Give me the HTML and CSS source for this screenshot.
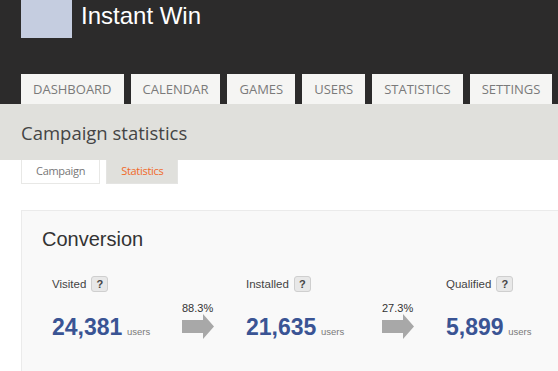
FILE: index.html
```html
<!doctype html>
<html lang="en">
<head>
<title>Campaign statistics | Instant Win</title>
<meta charset=UTF-8>
<link rel="stylesheet" href="styles.css">
</head>
<body>
<div class="top">
<div class="brand">
<div class="logo"></div>
<span class="appname">Instant Win</span>
</div>
<ul class="nav">
<li>Dashboard</li>
<li>Calendar</li>
<li>Games</li>
<li>Users</li>
<li>Statistics</li>
<li>Settings</li>
</ul>
</div>
<div class="band">
<h1>Campaign statistics</h1>
</div>
<ul class="subtabs">
<li>Campaign</li>
<li class="on">Statistics</li>
</ul>
<div class="panel">
<h2>Conversion</h2>
<div class="funnel">
<div class="stat">
<div class="label">Visited <span class="help">?</span></div>
<div class="num">24,381<small> users</small></div>
</div>
<div class="step">
<span class="pct">88.3%</span>
<svg viewBox="0 0 32 25" width="32" height="25"><polygon points="0,6 21,6 21,0 32,12.5 21,25 21,19 0,19" fill="#a8a8a8"/></svg>
</div>
<div class="stat">
<div class="label">Installed <span class="help">?</span></div>
<div class="num">21,635<small> users</small></div>
</div>
<div class="step">
<span class="pct">27.3%</span>
<svg viewBox="0 0 32 25" width="32" height="25"><polygon points="0,6 21,6 21,0 32,12.5 21,25 21,19 0,19" fill="#a8a8a8"/></svg>
</div>
<div class="stat">
<div class="label">Qualified <span class="help">?</span></div>
<div class="num">5,899<small> users</small></div>
</div>
</div>
</div>
</body>
</html>
```

FILE: styles.css
```css
body {margin: 0; background-color: #fff; font-family: "Liberation Sans", Arial, sans-serif; overflow: hidden;}
ul {list-style-type: none; margin: 0; padding: 0;}
.top {background-color: #2c2b2b; height: 104px; padding-left: 21px; display: flex; flex-direction: column; justify-content: space-between;}
.brand {display: flex; align-items: flex-start;}
.logo {width: 51px; height: 38px; background-color: #c5cde0;}
.appname {color: white; font-size: 24px; margin-left: 9px; line-height: 32px;}
.nav {display: flex; gap: 7px;}
.nav li {background: #f5f5f3; color: #7a7a7a; font-family: "Open Sans", sans-serif; font-size: 13px; text-transform: uppercase; padding: 0 12px; height: 30px; line-height: 30px;}
.band {background-color: #e0e0dc; height: 56px; padding-left: 21px; display: flex; align-items: center;}
h1 {font-family: "Open Sans", sans-serif; font-weight: normal; font-size: 18.5px; color: #444; margin: 0;}
.subtabs {display: flex; gap: 6px; padding-left: 21px;}
.subtabs li {font-family: "Open Sans", sans-serif; font-size: 11px; letter-spacing: -0.3px; color: #777; height: 23px; line-height: 22px; padding: 0 14px; border: 1px solid #e8e8e6; border-top: none; background: #fff;}
.subtabs li.on {background: #e0e0dc; color: #f06a2a; border-color: #e4e4e2;}
.panel {margin: 26px 0 0 21px; background: #f9f9f9; border: 1px solid #ebebeb; border-right: none; height: 170px; padding: 0 0 0 20px;}
h2 {font-weight: normal; font-size: 20px; color: #333; margin: 16px 0 0 0; line-height: 24px;}
.funnel {display: grid; grid-template-columns: 130px 64px 136px 64px 1fr; padding-left: 10px; margin-top: 25px;}
.label {font-size: 11.5px; color: #444; height: 16px; line-height: 16px; display: flex; align-items: center; gap: 5px;}
.help {display: inline-block; width: 15px; height: 14px; line-height: 14px; text-align: center; background: #e8e8e8; border: 1px solid #cfcfcf; border-radius: 3px; font-size: 11px; font-weight: bold; color: #444;}
.num {font-size: 23px; font-weight: bold; color: #3a5494; margin-top: 22px;}
.num small {font-size: 9.5px; font-weight: normal; color: #7a7a7a; margin-left: 2px;}
.step {display: flex; flex-direction: column; padding-top: 26px;}
.pct {font-size: 11px; color: #333; line-height: 12px;}
```
